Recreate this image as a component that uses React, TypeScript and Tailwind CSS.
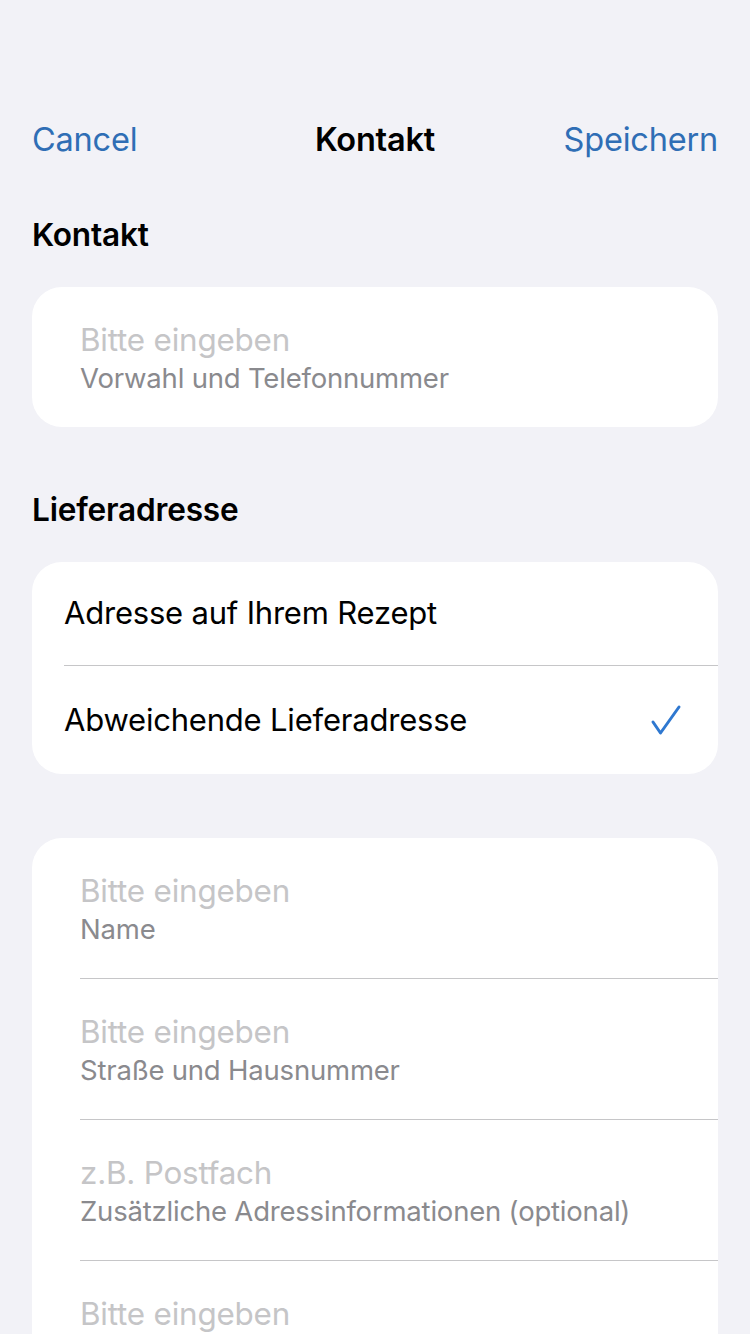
import React from 'react';

const blue = 'text-[#2f6eb5]';

const Field = ({ placeholder, label, divider }: { placeholder: string; label: string; divider?: boolean }) => (
  <div className="pl-12">
    <div className="pt-[35px] pb-[33px] flex flex-col gap-1">
      <span className="text-[31.4px] leading-[36px] text-[#c5c5c7]">{placeholder}</span>
      <span className="text-[27.5px] leading-[32px] text-[#8a8a8e]">{label}</span>
    </div>
    {divider && <div className="h-px bg-[#c6c6c8]" />}
  </div>
);

export default function App() {
  return (
    <div className="h-[1334px] overflow-hidden bg-[#f2f2f7] px-8 pt-[120px] font-['Inter','Liberation_Sans',sans-serif] tracking-[-0.2px]">
      {/* Nav bar */}
      <div className="grid grid-cols-[1fr_auto_1fr] items-center h-10 text-[32.5px] leading-10">
        <span className={blue}>Cancel</span>
        <span className="font-semibold text-black">Kontakt</span>
        <span className={`${blue} text-right`}>Speichern</span>
      </div>

      {/* Kontakt */}
      <h2 className="mt-[57px] mb-[34px] text-[31.6px] leading-9 font-semibold text-black">Kontakt</h2>
      <div className="bg-white rounded-[30px]">
        <Field placeholder="Bitte eingeben" label="Vorwahl und Telefonnummer" />
      </div>

      {/* Lieferadresse */}
      <h2 className="mt-[65px] mb-[34px] text-[31.6px] leading-9 font-semibold text-black">Lieferadresse</h2>
      <div className="bg-white rounded-[30px] pl-8">
        <div className="h-[103px] flex items-center text-[31px] text-black">Adresse auf Ihrem Rezept</div>
        <div className="h-px bg-[#c6c6c8]" />
        <div className="h-[108px] flex items-center justify-between pr-9 text-[31px] text-black">
          <span>Abweichende Lieferadresse</span>
          <svg width="32" height="32" viewBox="0 0 32 32" fill="none" stroke="#2f78d0" strokeWidth="3" strokeLinecap="round" strokeLinejoin="round">
            <path d="M3 18 L10.5 29 L29 3" />
          </svg>
        </div>
      </div>

      {/* Address fields */}
      <div className="mt-16 bg-white rounded-t-[30px]">
        <Field placeholder="Bitte eingeben" label="Name" divider />
        <Field placeholder="Bitte eingeben" label="Straße und Hausnummer" divider />
        <Field placeholder="z.B. Postfach" label="Zusätzliche Adressinformationen (optional)" divider />
        <Field placeholder="Bitte eingeben" label="PLZ" />
      </div>
    </div>
  );
}
